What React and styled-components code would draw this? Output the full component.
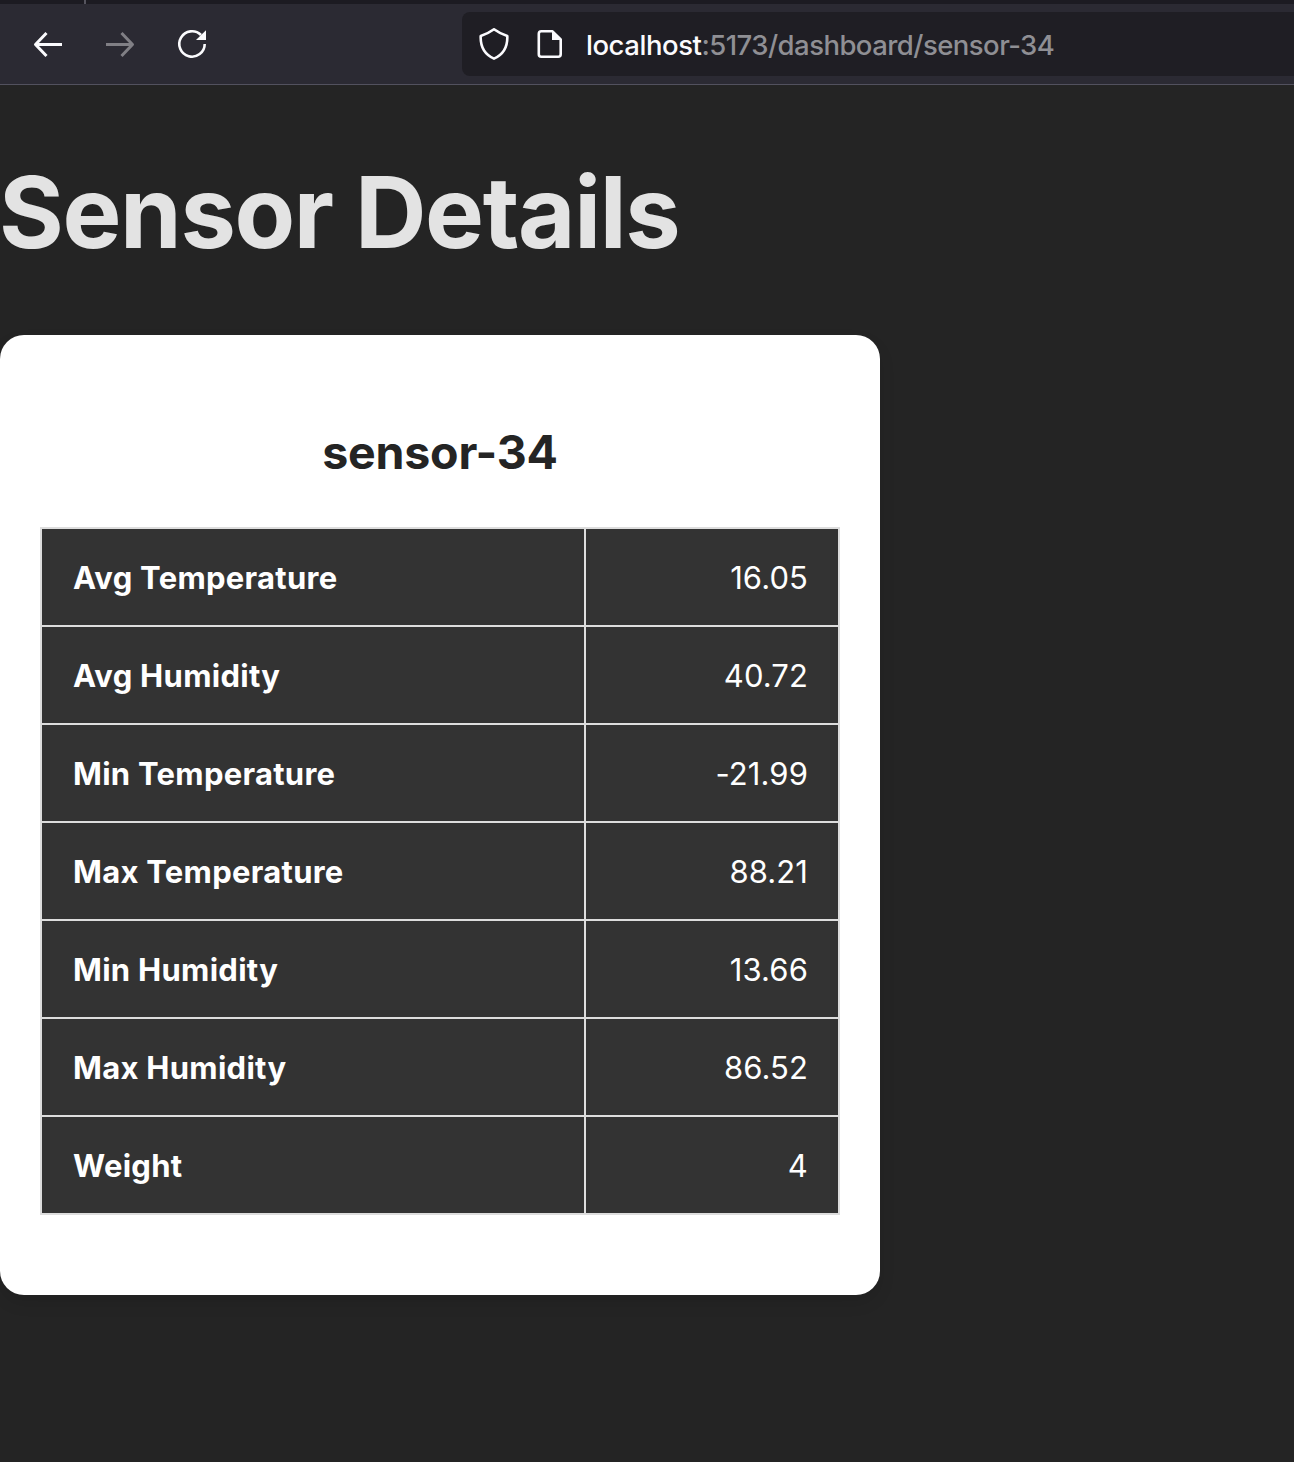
import React from 'react';
import styled, { createGlobalStyle } from 'styled-components';

const GlobalStyle = createGlobalStyle`
  * { box-sizing: border-box; }
  body {
    margin: 0;
    background: #242424;
    font-family: Inter, "Liberation Sans", sans-serif;
    overflow: hidden;
  }
`;

const Window = styled.div`
  width: 100%;
  height: 1462px;
  display: flex;
  flex-direction: column;
  background: #242424;
`;

const TabStrip = styled.div`
  height: 4px;
  flex: none;
  padding-left: 84px;
  background: #1c1b22;
`;

const TabDivider = styled.div`
  width: 2px;
  height: 4px;
  background: #55545e;
`;

const Toolbar = styled.div`
  height: 81px;
  flex: none;
  display: flex;
  align-items: center;
  background: #2b2a33;
  border-bottom: 1px solid #52515e;
`;

const NavButtons = styled.div`
  width: 462px;
  flex: none;
  padding-left: 32px;
  display: flex;
  gap: 40px;
`;

const Icon = styled.svg`
  display: block;
  flex: none;
  width: 32px;
  height: 32px;
  fill: none;
  stroke: ${(p) => p.$color || '#fbfbfe'};
  stroke-width: ${(p) => p.$weight || 3};
  stroke-linejoin: round;
`;

const AddressBar = styled.div`
  flex: 1;
  height: 64px;
  padding-left: 16px;
  display: flex;
  align-items: center;
  gap: 24px;
  border-radius: 8px 0 0 8px;
  background: #1f1e24;
`;

const Url = styled.div`
  margin-left: -4px;
  padding-top: 1px;
  font-size: 27.5px;
  font-weight: 450;
  line-height: 32px;
  letter-spacing: -0.54px;
  white-space: nowrap;
  color: #8f8f94;
`;

const Host = styled.span`
  color: #fbfbfe;
  letter-spacing: -0.46px;
`;

const Page = styled.main`
  flex: 1;
`;

const Title = styled.h1`
  margin: 71px 0 67px;
  font-size: 99px;
  font-weight: 700;
  line-height: 112px;
  letter-spacing: -1.35px;
  text-indent: -1px;
  white-space: nowrap;
  color: #e3e3e3;
`;

const Card = styled.section`
  width: 880px;
  height: 960px;
  padding: 81px 40px 0;
  border-radius: 24px;
  background: #fff;
  box-shadow: 0 8px 16px rgba(0, 0, 0, 0.1);
`;

const CardTitle = styled.h2`
  margin: 0 0 39px;
  font-size: 46.5px;
  font-weight: 700;
  line-height: 72px;
  letter-spacing: -0.2px;
  text-align: center;
  color: #242424;
`;

const Table = styled.table`
  width: 800px;
  table-layout: fixed;
  border-collapse: collapse;
  color: #fff;
  background: #333;
`;

const Row = styled.tr`
  height: 98px;
`;

const Label = styled.th`
  width: 544px;
  padding: 2px 31px 0;
  border: 2px solid #ddd;
  font-size: 31px;
  font-weight: 700;
  line-height: 48px;
  letter-spacing: 0.28px;
  text-align: left;
`;

const Value = styled.td`
  padding: 2px 30px 0;
  border: 2px solid #ddd;
  font-size: 31px;
  line-height: 48px;
  letter-spacing: 0.1px;
  text-align: right;
`;

const readings = [
  ['Avg Temperature', '16.05'],
  ['Avg Humidity', '40.72'],
  ['Min Temperature', '-21.99'],
  ['Max Temperature', '88.21'],
  ['Min Humidity', '13.66'],
  ['Max Humidity', '86.52'],
  ['Weight', '4'],
];

export default function App() {
  return (
    <Window>
      <GlobalStyle />
      <TabStrip><TabDivider /></TabStrip>
      <Toolbar>
        <NavButtons>
          <Icon viewBox="0 0 32 32"><path d="M30 16.5H4M14.5 5 3.5 16.5l11 11.5" /></Icon>
          <Icon viewBox="0 0 32 32" $color="#807f85"><path d="M2 16.5h26M17.5 5l11 11.5-11 11.5" /></Icon>
          <Icon viewBox="0 0 32 32" $weight={2.6}>
            <path d="M28.7 16a12.7 12.7 0 1 1-3.7-9" />
            <path d="M30 2.2v9.800H20z" fill="#fbfbfe" stroke="none" />
          </Icon>
        </NavButtons>
        <AddressBar>
          <Icon viewBox="0 0 32 32" $weight={2.6}>
            <path d="M16 1.3c4 2.9 7.8 5 13.3 6.7.4 9.8-3.3 18.2-13.3 22.6C6 26.2 2.3 17.8 2.7 8 8.2 6.3 12 4.2 16 1.3z" />
          </Icon>
          <Icon viewBox="0 0 32 32" $weight={2.6}>
            <path d="M18.500 3.300H7.300a2.500 2.500 0 0 0-2.500 2.500v20.400a2.500 2.500 0 0 0 2.500 2.500h16.900a2.500 2.500 0 0 0 2.500-2.500V11.500z" />
            <path d="M18 2.400v9.600h9.600z" fill="#fbfbfe" stroke="none" />
          </Icon>
          <Url><Host>localhost</Host>:5173/dashboard/sensor-34</Url>
        </AddressBar>
      </Toolbar>
      <Page>
        <Title>Sensor Details</Title>
        <Card>
          <CardTitle>sensor-34</CardTitle>
          <Table>
            <tbody>
              {readings.map(([label, value]) => (
                <Row key={label}>
                  <Label scope="row">{label}</Label>
                  <Value>{value}</Value>
                </Row>
              ))}
            </tbody>
          </Table>
        </Card>
      </Page>
    </Window>
  );
}
